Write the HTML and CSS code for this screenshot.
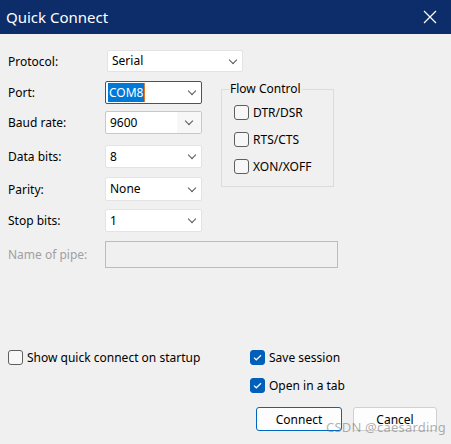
FILE: index.html
```html
<!DOCTYPE html>
<html>
<head>
<meta charset="utf-8">
<link rel="stylesheet" href="styles.css">
</head>
<body>
<div class="window">
  <div class="titlebar">
    <span class="title">Quick Connect</span>
    <svg class="close" width="14" height="14" viewBox="0 0 14 14"><path d="M1 1 L13 13 M13 1 L1 13" stroke="#fff" stroke-width="1.2" fill="none"/></svg>
  </div>
  <div class="content">
    <div class="form">
      <div class="label r1">Protocol:</div>
      <div class="field r1"><div class="select wide"><span>Serial</span><i class="chev"></i></div></div>

      <div class="label r2">Port:</div>
      <div class="field r2"><div class="select focus"><span class="sel">COM8</span><i class="chev"></i></div></div>

      <div class="label r3">Baud rate:</div>
      <div class="field r3"><div class="select combo"><span>9600</span><span class="btn"><i class="chev"></i></span></div></div>

      <div class="label r4">Data bits:</div>
      <div class="field r4"><div class="select"><span>8</span><i class="chev"></i></div></div>

      <div class="label r5">Parity:</div>
      <div class="field r5"><div class="select tall"><span>None</span><i class="chev"></i></div></div>

      <div class="label r6">Stop bits:</div>
      <div class="field r6"><div class="select"><span>1</span><i class="chev"></i></div></div>

      <div class="label r7 disabled">Name of pipe:</div>
      <div class="field r7 span2"><div class="pipe"></div></div>

      <fieldset class="flow">
        <legend>Flow Control</legend>
        <label class="check"><span class="box"></span>DTR/DSR</label>
        <label class="check"><span class="box"></span>RTS/CTS</label>
        <label class="check"><span class="box"></span>XON/XOFF</label>
      </fieldset>
    </div>

    <div class="bottom">
      <div class="left">
        <label class="check"><span class="box"></span>Show quick connect on startup</label>
      </div>
      <div class="right">
        <label class="check"><span class="box on"><svg width="15" height="15" viewBox="0 0 15 15"><path d="M4 7.6 L6.3 9.8 L11 5.2" stroke="#fff" stroke-width="1.2" fill="none"/></svg></span>Save session</label>
        <label class="check"><span class="box on"><svg width="15" height="15" viewBox="0 0 15 15"><path d="M4 7.6 L6.3 9.8 L11 5.2" stroke="#fff" stroke-width="1.2" fill="none"/></svg></span>Open in a tab</label>
      </div>
    </div>

    <div class="buttons">
      <button class="button default">Connect</button>
      <button class="button">Cancel</button>
    </div>
  </div>
  <div class="watermark">CSDN @caesarding</div>
</div>
</body>
</html>
```
FILE: styles.css
```css
* { box-sizing: border-box; }
html, body { margin: 0; padding: 0; }
body {
  width: 451px;
  height: 444px;
  overflow: hidden;
  background: #f0f0f0;
  font-family: "Noto Sans", "Liberation Sans", sans-serif;
  font-size: 12px;
  color: #000;
}
.window { position: relative; width: 451px; height: 444px; }
.titlebar {
  height: 34px;
  background: #0c2d69;
  display: flex;
  align-items: center;
  justify-content: space-between;
  padding: 0 14px 0 6px;
}
.title { color: #fff; font-size: 15px; line-height: 20px; }
.close { display: block; }

.content { padding: 16px 0 0 8px; }

.form {
  display: grid;
  grid-template-columns: 97px 116px 118px;
  grid-template-rows: 31px 30px 34px 32px 32px 32px 27px;
}
.label { display: flex; align-items: flex-start; line-height: 23px; grid-column: 1; }
.label.r2, .label.r3, .label.r4, .label.r6 { line-height: 24px; }
.label.r5 { line-height: 25px; }
.label.r7 { line-height: 27px; }
.label.disabled { color: #a0a0a0; }
.field { grid-column: 2; }
.field.span2 { grid-column: 2 / 4; }
.r1 { grid-row: 1; } .r2 { grid-row: 2; } .r3 { grid-row: 3; } .r4 { grid-row: 4; }
.r5 { grid-row: 5; } .r6 { grid-row: 6; } .r7 { grid-row: 7; }

.select {
  width: 97px;
  height: 23px;
  background: #fff;
  border: 1px solid #e3e3e3;
  border-radius: 2px;
  display: flex;
  align-items: center;
  justify-content: space-between;
  padding: 0 6px 0 4px;
  line-height: 18px;
}
.select.wide { width: 136px; height: 22px; margin-left: 2px; }
.select.tall { height: 24px; }
.select.focus { border-color: #0067c0; padding-left: 2px; }
.sel {
  background: #0078d7;
  color: #fff;
  padding: 0 1px;
  border-right: 1px solid #e07a2a;
  height: 19px;
  line-height: 19px;
}
.select.combo { border-color: #c8c8c8; padding-right: 0; }
.select.combo .btn {
  width: 24px;
  height: 21px;
  background: #f7f7f7;
  display: flex;
  align-items: center;
  justify-content: center;
}
.chev {
  display: block;
  width: 6px;
  height: 6px;
  border-right: 1px solid #555;
  border-bottom: 1px solid #555;
  transform: rotate(45deg);
  margin-top: -3px;
}
.pipe {
  width: 233px;
  height: 27px;
  border: 1px solid #bcbcbc;
  background: #f0f0f0;
}

.flow {
  grid-column: 3;
  grid-row: 2 / 6;
  align-self: start;
  margin: 0;
  padding: 8px 0 0 12px;
  width: 113px;
  height: 106px;
  border: 1px solid #dcdcdc;
  display: flex;
  flex-direction: column;
  gap: 12px;
}
.flow legend { padding: 0 1px; margin-left: -5px; line-height: 16px; font-size: 12px; }
.flow .check { height: 15px; }

.check { display: flex; align-items: center; gap: 4px; line-height: 15px; }
.box {
  width: 15px;
  height: 15px;
  border: 1px solid #5f5f5f;
  border-radius: 3px;
  background: #f7f7f7;
  flex: none;
}
.box.on { background: #005fb8; border-color: #005fb8; position: relative; }
.box.on svg { display: block; margin: -1px; }

.bottom {
  display: flex;
  margin-top: 82px;
}
.bottom .left { width: 242px; }
.bottom .right { display: flex; flex-direction: column; gap: 13px; }

.buttons {
  display: flex;
  gap: 11px;
  margin: 14px 0 0 248px;
}
.button {
  font-family: inherit;
  font-size: 12px;
  color: #000;
  height: 24px;
  background: #fdfdfd;
  border: 1px solid #d0d0d0;
  border-radius: 3px;
  padding: 0;
  width: 84px;
}
.button.default { width: 86px; border-color: #0067c0; }

.watermark {
  position: absolute;
  left: 326px;
  top: 419px;
  font-size: 13px;
  line-height: 17px;
  color: rgba(110, 110, 110, 0.55);
  letter-spacing: 0.2px;
}
```
